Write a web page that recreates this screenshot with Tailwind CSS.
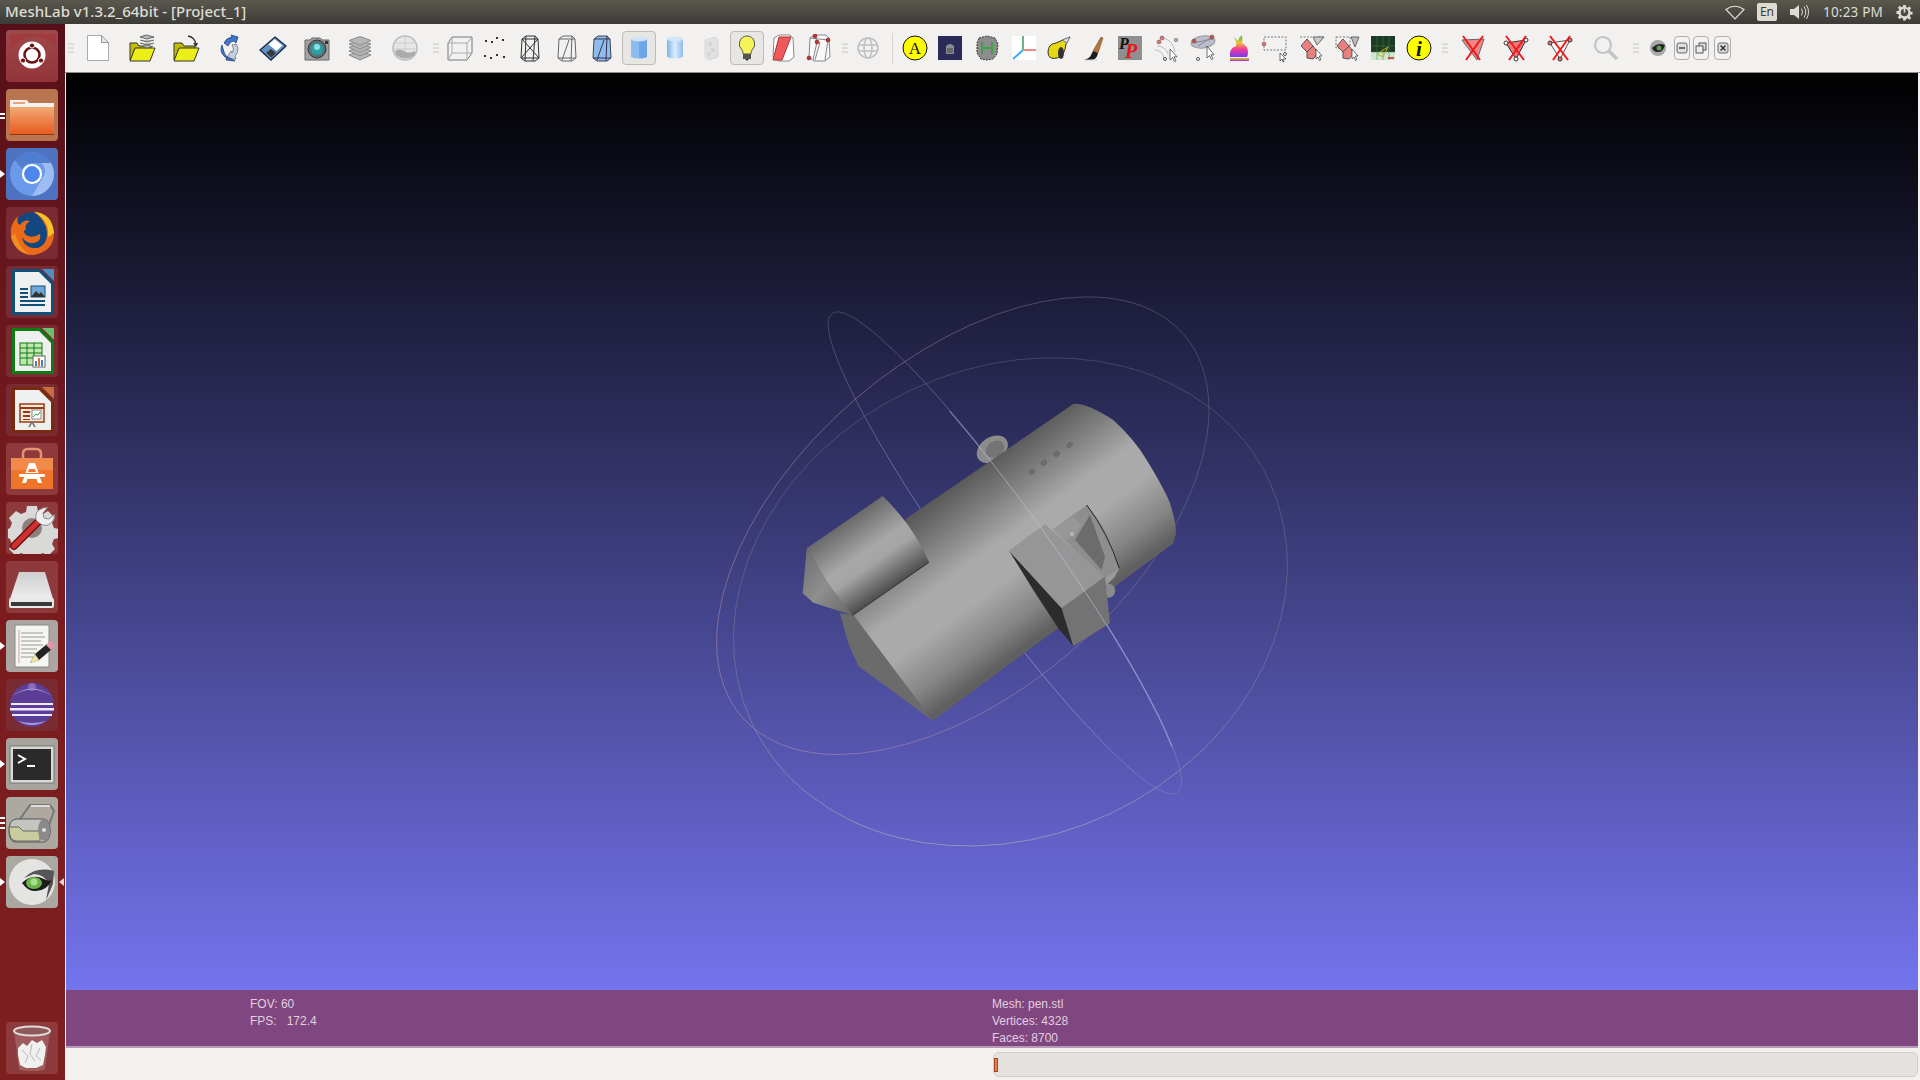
<!DOCTYPE html>
<html>
<head>
<meta charset="utf-8">
<title>MeshLab</title>
<script src="https://cdn.jsdelivr.net/npm/@tailwindcss/browser@4"></script>
</head>
<body class="w-[1920px] h-[1080px] overflow-hidden flex flex-col bg-[#f2f1f0] font-['Liberation_Sans',sans-serif]">

<!-- shared gradients -->
<svg class="absolute w-0 h-0">
  <defs>
    <linearGradient id="body" gradientUnits="userSpaceOnUse" x1="990" y1="460" x2="1091" y2="598">
      <stop offset="0" stop-color="#5a5a5a"/><stop offset=".2" stop-color="#7f7f7f"/><stop offset=".42" stop-color="#aaaaaa"/><stop offset=".62" stop-color="#aaaaaa"/><stop offset=".85" stop-color="#858585"/><stop offset="1" stop-color="#606060"/>
    </linearGradient>
    <linearGradient id="nose" gradientUnits="userSpaceOnUse" x1="882.7" y1="496" x2="928.6" y2="562.7">
      <stop offset="0" stop-color="#6a6a6a"/><stop offset=".45" stop-color="#a8a8a8"/><stop offset=".62" stop-color="#a4a4a4"/><stop offset="1" stop-color="#4e4e4e"/>
    </linearGradient>
    <linearGradient id="tip" x1="0" y1="0" x2="1" y2="1">
      <stop offset="0" stop-color="#6c6c6c"/><stop offset=".5" stop-color="#8f8f8f"/><stop offset="1" stop-color="#666666"/>
    </linearGradient>
    <linearGradient id="ringA" gradientUnits="userSpaceOnUse" x1="832" y1="314" x2="1177" y2="792">
      <stop offset="0" stop-color="#77778c"/><stop offset=".35" stop-color="#b4b4f0"/><stop offset=".7" stop-color="#c8c8f8"/><stop offset="1" stop-color="#8c8cb0"/>
    </linearGradient>
    <linearGradient id="ringB" gradientUnits="userSpaceOnUse" x1="716" y1="600" x2="1209" y2="400">
      <stop offset="0" stop-color="#d0a0b0"/><stop offset=".5" stop-color="#c094a4"/><stop offset="1" stop-color="#77778c"/>
    </linearGradient>
    <linearGradient id="ringC" gradientUnits="userSpaceOnUse" x1="1010" y1="358" x2="1010" y2="846">
      <stop offset="0" stop-color="#6e6e80"/><stop offset=".6" stop-color="#8a8a9c"/><stop offset="1" stop-color="#c0dcb8"/>
    </linearGradient>
    <linearGradient id="tile" x1="0" y1="0" x2="0" y2="1">
      <stop offset="0" stop-color="#ffffff" stop-opacity=".14"/><stop offset="1" stop-color="#ffffff" stop-opacity=".04"/>
    </linearGradient>
    <linearGradient id="blueCyl" x1="0" y1="0" x2="1" y2="0">
      <stop offset="0" stop-color="#7fb4ea"/><stop offset=".5" stop-color="#dcecfb"/><stop offset="1" stop-color="#8fbcec"/>
    </linearGradient>
    <linearGradient id="rainbow" x1="0" y1="0" x2="0" y2="1">
      <stop offset="0" stop-color="#3bc24a"/><stop offset=".35" stop-color="#f0c030"/><stop offset=".65" stop-color="#f03a9a"/><stop offset="1" stop-color="#7a3af0"/>
    </linearGradient>
    <linearGradient id="driveTop" x1="0" y1="0" x2="0" y2="1">
      <stop offset="0" stop-color="#cfcfcf"/><stop offset="1" stop-color="#ededed"/>
    </linearGradient>
    <linearGradient id="folderFront" x1="0" y1="0" x2="0" y2="1">
      <stop offset="0" stop-color="#f2a874"/><stop offset="1" stop-color="#e85c20"/>
    </linearGradient>
  </defs>
</svg>

<!-- top panel -->
<div class="h-6 shrink-0 flex items-center bg-linear-to-b from-[#5a584e] to-[#3c3b37] text-[#dfdbd2] font-['Noto_Sans',sans-serif]">
  <div class="pl-[5px] pb-[2px] text-[15px] font-medium">MeshLab v1.3.2_64bit - [Project_1]</div>
  <svg class="ml-auto w-[20px] h-[16px]" viewBox="0 0 20 16"><path d="M1 5.5Q10 -1 19 5.5L10 15z" fill="none" stroke="#e0ddd6" stroke-width="1.2"/></svg>
  <div class="ml-[12px] w-[20px] h-[18px] bg-[#dfdbd2] rounded-[2px] flex items-center justify-center text-[#3c3b37] text-[12px]">En</div>
  <svg class="ml-[12px] w-[20px] h-[16px]" viewBox="0 0 20 16"><path d="M1 5h4l5-4v14l-5-4H1z" fill="#dfdbd2"/><path d="M12.5 4.5q2 3.500 0 7M15 2.500q3.500 5.500 0 11M17.500 1q4 7 0 14" fill="none" stroke="#dfdbd2"/></svg>
  <div class="ml-[14px] text-[13.500px] tracking-[.2px]">10:23 PM</div>
  <svg class="ml-[13px] mr-[7px] w-[17px] h-[17px]" viewBox="0 0 18 18"><path d="M7.500 1h3v2.200l2 .8 1.600-1.500 2 2-1.500 1.600.8 2H17.500v3h-2.100l-.8 2 1.500 1.600-2 2-1.600-1.500-2 .8V17.500h-3v-2.100l-2-.8-1.600 1.500-2-2 1.500-1.600-.8-2H.500v-3h2.100l.8-2-1.500-1.600 2-2 1.600 1.500 2-.8z" fill="#dfdbd2"/><circle cx="9" cy="9" r="4" fill="#4b4a42"/><path d="M9 4v5" stroke="#dfdbd2" stroke-width="1.800"/></svg>
</div>

<div class="flex flex-1 min-h-0">

  <!-- launcher -->
  <div class="w-[65px] shrink-0 flex flex-col gap-[7px] pl-[6px] pt-[6px] pb-[6px] bg-linear-to-b from-[#56101a] via-[#7a1c1e] to-[#7d1f1f]">

    <div class="relative w-[52px] h-[52px]">
      <svg viewBox="0 0 52 52" class="w-full h-full"><rect width="52" height="52" rx="4" fill="#8e2c30"/><rect width="52" height="52" rx="4" fill="url(#tile)"/><path d="M4 20Q26 -6 50 18L50 4 4 4z" fill="#a03c3e"/><circle cx="26" cy="25" r="13.500" fill="#fff"/><circle cx="26" cy="25" r="7.500" fill="none" stroke="#6a1414" stroke-width="2.600"/><circle cx="26" cy="15.500" r="2.600" fill="#6a1414" stroke="#fff"/><circle cx="17" cy="30.500" r="2.600" fill="#6a1414" stroke="#fff"/><circle cx="35" cy="30.500" r="2.600" fill="#6a1414" stroke="#fff"/></svg>
    </div>

    <div class="relative w-[52px] h-[52px]">
      <span class="absolute -left-[6px] top-[24px] w-[5px] h-[2px] bg-white"></span><span class="absolute -left-[6px] top-[28px] w-[5px] h-[2px] bg-white"></span>
      <svg viewBox="0 0 52 52" class="w-full h-full"><rect width="52" height="52" rx="4" fill="#b8754f"/><path d="M4 11h17l2 3h25v6H4z" fill="#f5f2ee"/><path d="M7 13h12v2H7z" fill="#eaa37a"/><path d="M4 18h44v27H4z" fill="url(#folderFront)"/><path d="M4 45h44v1H4z" fill="#8a3a18"/></svg>
    </div>

    <div class="relative w-[52px] h-[52px]">
      <span class="absolute -left-[6px] top-[22px] border-y-[4px] border-y-transparent border-l-[5px] border-l-white"></span>
      <svg viewBox="0 0 52 52" class="w-full h-full"><rect width="52" height="52" rx="4" fill="#4e72c0"/><circle cx="26" cy="26" r="22" fill="#6c9aea"/><path d="M26 4a22 22 0 0 1 19 11H26a11 11 0 0 0-10 6L9 12A22 22 0 0 1 26 4z" fill="#4f7dd0"/><path d="M45 15a22 22 0 0 1-19 33l10-17a11 11 0 0 0-1-16z" fill="#9dbcf2"/><circle cx="26" cy="26" r="9" fill="#4d86ec" stroke="#fff" stroke-width="2.200"/></svg>
    </div>

    <div class="relative w-[52px] h-[52px]">
      <svg viewBox="0 0 52 52" class="w-full h-full"><rect width="52" height="52" rx="4" fill="#7a2a33"/><circle cx="27" cy="26" r="21" fill="#13477f"/><path d="M28 5Q46 6 48 26Q48 44 28 48Q10 48 5 30Q3 18 12 9Q10 16 14 18Q18 12 24 14Q18 18 20 22Q16 24 20 28Q26 32 34 27Q36 34 28 36Q20 37 16 30Q18 42 32 41Q44 36 40 20Q36 10 28 5z" fill="#ea6a1a"/><path d="M28 5Q46 6 48 26L42 30Q44 14 28 5z" fill="#f7c32a"/><path d="M5 30Q9 44 24 48Q12 40 9 26z" fill="#f09020"/></svg>
    </div>

    <div class="relative w-[52px] h-[52px]">
      <svg viewBox="0 0 52 52" class="w-full h-full"><rect width="52" height="52" rx="4" fill="#7a2a33"/><path d="M6 3h28l14 14v32H6z" fill="#0f4f78"/><path d="M9 6h24l12 12v28H9z" fill="#eef0f0"/><path d="M36 3h12v12z" fill="#4a90c0"/><path d="M14 22h8v2h-8zM14 26h8v2h-8zM14 30h8v2h-8zM14 34h25v2H14zM14 38h25v2H14z" fill="#0f4f78"/><rect x="25" y="20" width="14" height="11" fill="#6ea8d8" stroke="#0f4f78"/><path d="M25 31l5-6 3 3 2-2 4 5z" fill="#333"/></svg>
    </div>

    <div class="relative w-[52px] h-[52px]">
      <svg viewBox="0 0 52 52" class="w-full h-full"><rect width="52" height="52" rx="4" fill="#7a2a33"/><path d="M6 3h28l14 14v32H6z" fill="#127a12"/><path d="M9 6h24l12 12v28H9z" fill="#eef0f0"/><path d="M36 3h12v12z" fill="#6cc06c"/><rect x="14" y="18" width="22" height="22" fill="#bfe8b0" stroke="#127a12"/><path d="M14 23h22M14 28h22M14 33h22M21 18v22M28 18v22" stroke="#127a12"/><rect x="27" y="31" width="12" height="11" fill="#fff" stroke="#666"/><path d="M29 36h2v5h-2z" fill="#3a80d0"/><path d="M32 33h2v8h-2z" fill="#e07020"/><path d="M35 35h2v6h-2z" fill="#3a80d0"/></svg>
    </div>

    <div class="relative w-[52px] h-[52px]">
      <svg viewBox="0 0 52 52" class="w-full h-full"><rect width="52" height="52" rx="4" fill="#7a2a33"/><path d="M6 3h28l14 14v32H6z" fill="#7a2a0c"/><path d="M9 6h24l12 12v28H9z" fill="#eef0f0"/><path d="M36 3h12v12z" fill="#c8703c"/><rect x="14" y="20" width="24" height="18" fill="#f4e8dc" stroke="#9a3a10" stroke-width="1.500"/><path d="M14 24h24" stroke="#9a3a10" stroke-width="2"/><path d="M17 27h7v2h-7zM17 31h7v2h-7zM17 35h7v1h-7z" fill="#9a3a10"/><rect x="26" y="26" width="9" height="9" fill="#fff" stroke="#888"/><path d="M27 33l3-3 2 1 2-3" fill="none" stroke="#3a9a3a"/><path d="M26 38l-3 5M26 38l3 5" stroke="#777" stroke-width="1.500"/></svg>
    </div>

    <div class="relative w-[52px] h-[52px]">
      <svg viewBox="0 0 52 52" class="w-full h-full"><rect width="52" height="52" rx="4" fill="#8e3a3c"/><path d="M5 15h42v31H5z" fill="#f0752c"/><path d="M5 15h42v12H5z" fill="#f18a48"/><path d="M17 16v-5q0-5 5-5h8q5 0 5 5v5" fill="none" stroke="#e89070" stroke-width="2.500"/><path d="M23 20h6l7 20h-4l-1.500-4h-9L20 40h-4z" fill="#fff"/><path d="M17 30h18v3H17zM23 26h6l1 3h-8z" fill="#f0752c"/><rect x="13" y="31" width="26" height="3" rx="1" fill="#fff"/></svg>
    </div>

    <div class="relative w-[52px] h-[52px]">
      <svg viewBox="0 0 52 52" class="w-full h-full"><rect width="52" height="52" rx="4" fill="#8e3a3c"/><path d="M21 4h10l1 6 5 2 5-3 7 7-3 5 2 5 5 1v9l-5 1-2 5 3 5-7 7-5-3-5 2-1 1H21l-1-1-5-2-5 3-7-7 3-5-2-5-2-1v-9l2-1 2-5-3-5 7-7 5 3 5-2z" fill="#d9d9d7"/><circle cx="26" cy="26" r="10" fill="#8e7e7c"/><path d="M8 44L34 18" stroke="#6e1414" stroke-width="8" stroke-linecap="round"/><path d="M8 44L34 18" stroke="#d03030" stroke-width="5" stroke-linecap="round"/><path d="M30 18q-2-9 7-12l5-1-5 6 1 5 5 1 6-5q-1 8-7 11-6 2-12-5z" fill="#eeeeee" stroke="#777" stroke-width=".800"/></svg>
    </div>

    <div class="relative w-[52px] h-[52px]">
      <svg viewBox="0 0 52 52" class="w-full h-full"><rect width="52" height="52" rx="4" fill="#8e3a3c"/><path d="M13 11h26l8 27H4z" fill="url(#driveTop)"/><rect x="3" y="37" width="45" height="10" rx="2" fill="#e8e8e8"/><rect x="5" y="41" width="41" height="4" fill="#3a3a3a"/></svg>
    </div>

    <div class="relative w-[52px] h-[52px]">
      <span class="absolute -left-[6px] top-[22px] border-y-[4px] border-y-transparent border-l-[5px] border-l-white"></span>
      <svg viewBox="0 0 52 52" class="w-full h-full"><rect width="52" height="52" rx="4" fill="#aba6a1"/><rect x="9" y="5" width="34" height="42" fill="#f5f5f2" stroke="#8a8a8a"/><path d="M13 10v33" stroke="#e09a9a"/><path d="M15 13h22M15 17h24M15 21h20M15 25h22M15 29h16M15 33h14M15 37h12" stroke="#999"/><path d="M24 43l5-9 12-10 5 5-13 11z" fill="#222"/><path d="M40 25l3-3q2-1 3 0l2 2q1 1 0 3l-3 3z" fill="#e793b0"/><path d="M24 43l5-9 4 6z" fill="#f2e6a0"/></svg>
    </div>

    <div class="relative w-[52px] h-[52px]">
      <svg viewBox="0 0 52 52" class="w-full h-full"><rect width="52" height="52" rx="4" fill="#7a2a33"/><circle cx="26" cy="26" r="22" fill="#5c3e96"/><path d="M6 17Q26 4 46 17Q26 2 6 17z" fill="#fff" opacity=".5"/><path d="M5 24h42v2H5zM4 29h44v2.500H4zM6 35h40v2H6z" fill="#efe8fb"/><path d="M12 42Q26 50 40 42Q26 46 12 42z" fill="#b09ad8"/><circle cx="26" cy="8" r="4" fill="#a48ad6" opacity=".6"/></svg>
    </div>

    <div class="relative w-[52px] h-[52px]">
      <span class="absolute -left-[6px] top-[22px] border-y-[4px] border-y-transparent border-l-[5px] border-l-white"></span>
      <svg viewBox="0 0 52 52" class="w-full h-full"><rect width="52" height="52" rx="4" fill="#a8a29c"/><rect x="4" y="8" width="44" height="37" fill="#d8d8d6" stroke="#777"/><rect x="7" y="11" width="38" height="31" fill="#2a2a2a"/><path d="M12 17l7 4-7 4" fill="none" stroke="#fff" stroke-width="2"/><path d="M21 27h8v2h-8z" fill="#fff"/></svg>
    </div>

    <div class="relative w-[52px] h-[52px]">
      <span class="absolute -left-[6px] top-[20px] w-[5px] h-[2px] bg-white"></span><span class="absolute -left-[6px] top-[25px] w-[5px] h-[2px] bg-white"></span><span class="absolute -left-[6px] top-[30px] w-[5px] h-[2px] bg-white"></span>
      <svg viewBox="0 0 52 52" class="w-full h-full"><rect width="52" height="52" rx="4" fill="#aea9a0"/><path d="M14 22L24 8h20l4 6-8 22" fill="none" stroke="#777" stroke-width="2"/><path d="M25 9h19" stroke="#ddd" stroke-width="2"/><path d="M10 22h28a6 11 0 0 1 0 23H10q-7 0-7-11t7-12z" fill="#c4c4c0" stroke="#555"/><path d="M3 30h10l4 4h17v10H10q-7 0-7-14z" fill="#c9cc9c" stroke="#666"/><ellipse cx="38" cy="33" rx="6" ry="11" fill="#8a8a8a"/><circle cx="38" cy="33" r="2" fill="#ddd"/></svg>
    </div>

    <div class="relative w-[52px] h-[52px]">
      <span class="absolute -left-[6px] top-[22px] border-y-[4px] border-y-transparent border-l-[5px] border-l-white"></span>
      <span class="absolute left-[53px] top-[22px] border-y-[4px] border-y-transparent border-r-[5px] border-r-[#d8d8d8]"></span>
      <svg viewBox="0 0 52 52" class="w-full h-full"><rect width="52" height="52" rx="4" fill="#aaa8a0"/><circle cx="26" cy="26" r="23" fill="#e4e4e2"/><path d="M18 22Q30 10 48 15L47 28Q43 38 40 44L43 28Q38 18 28 18z" fill="#555"/><path d="M16 27Q26 17 38 23Q43 26 46 24Q40 36 28 35Q22 35 16 27z" fill="#1c1c1c"/><ellipse cx="28" cy="27" rx="8" ry="6" fill="#6cb24a"/><circle cx="28" cy="26" r="3.500" fill="#a6e08e"/></svg>
    </div>

    <div class="relative w-[52px] h-[52px] mt-auto">
      <svg viewBox="0 0 52 52" class="w-full h-full"><rect width="52" height="52" rx="4" fill="#8e3a3c"/><path d="M8 9l5 38q0 2 13 2t13-2l5-38z" fill="#a86a6a" opacity=".7"/><ellipse cx="26" cy="9" rx="18" ry="4.500" fill="#8e5a5a" stroke="#ddd" stroke-width="2"/><path d="M12 26l5-5 4 3 5-6 5 3 5-3 4 7-1 8-2 10-7 3h-10l-6-3-2-10z" fill="#f0f0ee"/><path d="M16 28l6 6-3 7M26 22l-2 10 5 7M34 26l-4 8 5 4" stroke="#b8b8b8" fill="none"/></svg>
    </div>
  </div>

  <div class="flex-1 min-w-0 flex flex-col">

    <!-- toolbar -->
    <div class="h-[49px] shrink-0 flex items-center border-b border-[#8c8c8c] bg-[#f2f1f0]">
      <svg class="ml-[2px] w-[8px] h-[10px]" viewBox="0 0 8 10"><path d="M1 1h6M1 5h6M1 9h6" stroke="#c8c8c6"/></svg>

      <svg class="ml-[9px] w-[28px] h-[28px]" viewBox="0 0 28 28"><path d="M3.500 1.500h14l7 7v18h-21z" fill="#fff" stroke="#aaa"/><path d="M17.500 1.500v7h7z" fill="#e8e8e8" stroke="#999"/></svg>
      <svg class="ml-4 w-[28px] h-[28px]" viewBox="0 0 28 28"><path d="M2 9h7l2 3h12v4H6L4 26H2z" fill="#c2bb00" stroke="#333"/><path d="M7 14h20l-5 13H2z" fill="#eded18" stroke="#333"/><path d="M12 3l6-2 8 2-7 2zM12 6l7 2 7-2M12 9l7 2 7-2M14 12l5 2 6-2" fill="#bbb" stroke="#666"/></svg>
      <svg class="ml-4 w-[28px] h-[28px]" viewBox="0 0 28 28"><path d="M2 9h8l2 3h11v4H6L4 26H2z" fill="#c2bb00" stroke="#333"/><path d="M7 14h20l-5 13H2z" fill="#eded18" stroke="#333"/><path d="M16 2q7 1 8 9" fill="none" stroke="#333" stroke-width="1.300"/><path d="M24 13l-3-4h5z" fill="#333"/></svg>
      <svg class="ml-4 w-[28px] h-[28px]" viewBox="0 0 28 28"><path d="M8 9q2-5 8-6l-1-2 7 2-2 6-2-2q-4 0-6 5z" fill="#3f76d0" stroke="#17306a" stroke-width=".700"/><path d="M20 10q4 5 0 11l-1 1 1 3H10l5-8 1 2q3-4 0-8z" fill="#c4cfe0" stroke="#667" stroke-width=".700"/><path d="M6 11q-3 7 3 12l2 1-1 2 9 1-5-3q-5-1-6-6z" fill="#3f76d0" stroke="#17306a" stroke-width=".700"/></svg>
      <svg class="ml-[15px] w-[28px] h-[28px]" viewBox="0 0 28 28"><path d="M16 3l11 9-15 14L1 16z" fill="#5f90c6" stroke="#1d2a3c" stroke-width="1.300"/><path d="M15.500 5l8 6.500-6 5.500-8-6.500z" fill="#fff"/><path d="M7 19l5-4 5 4-4.500 4.500z" fill="#3a3a3a"/></svg>
      <svg class="ml-4 w-[28px] h-[28px]" viewBox="0 0 28 28"><path d="M2 6h5l2-2h8l2 2h7v20H2z" fill="#a3a3a5" stroke="#666"/><circle cx="14" cy="15" r="9" fill="#5b6f75" stroke="#333"/><circle cx="14" cy="15" r="6" fill="#28a0a8"/><circle cx="14" cy="13" r="3" fill="#8ce0e0"/><rect x="22" y="7" width="3" height="3" fill="#333"/></svg>
      <svg class="ml-[15px] w-[28px] h-[28px]" viewBox="0 0 28 28"><g fill="#b6b6b6" stroke="#8a8a8a"><path d="M3 21l11-4 11 4-11 5z"/><path d="M3 17l11-4 11 4-11 5z"/><path d="M3 13.500l11-4 11 4-11 5z"/><path d="M3 10l11-4 11 4-11 5z"/><path d="M3 6.500l11-4 11 4-11 5z"/></g></svg>
      <svg class="ml-[17px] w-[28px] h-[28px]" viewBox="0 0 28 28"><circle cx="14" cy="14" r="12" fill="#e6e6e6" stroke="#bbb" stroke-width="1.500"/><path d="M14 2v24M3 9h22M2 15h24M3 21h22" stroke="#ccc"/><path d="M4 17q5-3 9 0t11 0v4Q14 28 5 21z" fill="#aaa"/></svg>

      <svg class="ml-[13px] w-[8px] h-[10px]" viewBox="0 0 8 10"><path d="M1 1h6M1 5h6M1 9h6" stroke="#c8c8c6"/></svg>

      <svg class="ml-[5px] w-[28px] h-[28px]" viewBox="0 0 28 28" fill="none" stroke="#777"><path d="M3 9l4-6h20v16l-5 7H3z"/><path d="M3 9h19v17M22 9l5-6M7 3v16h20M7 19l-4 7"  stroke="#aaa"/></svg>
      <svg class="ml-2 w-[28px] h-[28px]" viewBox="0 0 28 28" fill="#333"><rect x="4" y="6" width="2" height="2"/><rect x="10" y="7" width="2" height="2"/><rect x="15" y="3" width="2" height="2"/><rect x="21" y="5" width="2" height="2"/><rect x="3" y="21" width="2" height="2"/><rect x="9" y="23" width="2" height="2"/><rect x="15" y="20" width="2" height="2"/><rect x="22" y="22" width="2" height="2"/></svg>
      <svg class="ml-[7px] w-[28px] h-[28px]" viewBox="0 0 28 28" fill="none" stroke="#333"><path d="M6 5l4-3h9l3 3 1 19-4 3H9l-4-3z"/><path d="M6 5l17 19M22 5L5 24M10 2l-1 25M19 2l-2 25M6 5h16M5 24h18"/></svg>
      <svg class="ml-[9px] w-[28px] h-[28px]" viewBox="0 0 28 28" fill="none" stroke="#666"><path d="M6 5l4-3h9l3 3 1 19-4 3H9l-4-3z"/><path d="M6 5h16M5 24h18M16 6L9 26M19 2l-1 25"/></svg>
      <svg class="ml-[7px] w-[28px] h-[28px]" viewBox="0 0 28 28"><path d="M6 5l4-3h9l3 3 1 19-4 3H9l-4-3z" fill="#8fbce8" stroke="#445"/><path d="M6 5h16M5 24h18M16 6L9 26M19 2l-1 25" fill="none" stroke="#335"/></svg>

      <div class="ml-1.5 w-[34px] h-[34px] flex items-center justify-center rounded-[4px] border border-[#bdbcb9] bg-[#e8e6e3]">
        <svg class="w-[24px] h-[26px]" viewBox="0 0 24 26"><path d="M4 4q8-3 16 0v18q-8 3-16 0z" fill="#8abcf0"/><path d="M12 3h8v19q-4 2-8 1z" fill="#6aa6e8"/><ellipse cx="12" cy="4" rx="8" ry="2.500" fill="#cfe2f6"/></svg>
      </div>
      <svg class="ml-[5px] w-[28px] h-[28px]" viewBox="0 0 28 28"><path d="M6 5q8-3 16 0v18q-8 3-16 0z" fill="url(#blueCyl)"/><ellipse cx="14" cy="5" rx="8" ry="2.500" fill="#d4e6f8"/></svg>
      <svg class="ml-2 w-[28px] h-[28px]" viewBox="0 0 28 28" opacity=".28"><path d="M8 6l10-3 3 3v17l-9 3-4-3z" fill="#bbb" stroke="#999"/><circle cx="13" cy="10" r="2" fill="#888"/><circle cx="16" cy="16" r="2" fill="#888"/><circle cx="12" cy="20" r="2" fill="#888"/></svg>
      <div class="ml-[5px] w-[34px] h-[34px] flex items-center justify-center rounded-[4px] border border-[#bdbcb9] bg-[#e8e6e3]">
        <svg class="w-[22px] h-[28px]" viewBox="0 0 22 28"><path d="M11 2a8 8 0 0 1 5 14q-1 1-1 4H7q0-3-1-4A8 8 0 0 1 11 2z" fill="#f6f35a" stroke="#555"/><rect x="7" y="20" width="8" height="5" fill="#555"/><path d="M9 25h4l-2 2z" fill="#333"/></svg>
      </div>
      <svg class="ml-1 w-[28px] h-[28px]" viewBox="0 0 28 28"><path d="M6 4l5-3h11l3 3 1 19-5 4H10l-5-4z" fill="#fff" stroke="#888"/><path d="M11 3h12l-9 23H5z" fill="#ee5a5a" stroke="#a33"/></svg>
      <svg class="ml-2 w-[28px] h-[28px]" viewBox="0 0 28 28"><path d="M6 4l5-3h11l3 3 1 19-5 4H10l-5-4z" fill="#f8f8f8" stroke="#888"/><path d="M6 4l18 2M11 1l2 7-4 18M16 8l-5 18M24 6l-3 20" fill="none" stroke="#888"/><g fill="#c62f38" stroke="#6a1a1a" stroke-width=".500"><circle cx="11" cy="2" r="2"/><circle cx="13" cy="8" r="2"/><circle cx="24" cy="6" r="2"/><circle cx="5" cy="24" r="2"/></g></svg>

      <svg class="ml-[9px] w-[8px] h-[10px]" viewBox="0 0 8 10"><path d="M1 1h6M1 5h6M1 9h6" stroke="#c8c8c6"/></svg>
      <svg class="ml-[5px] w-[28px] h-[28px]" viewBox="0 0 28 28" fill="none" stroke="#c0c0c0" stroke-width="1.500"><circle cx="14" cy="14" r="10"/><ellipse cx="14" cy="14" rx="4" ry="10"/><path d="M4 11h20M4 17h20"/></svg>
      <div class="ml-2.5 w-px h-[31px] bg-[#d6d5d3]"></div>

      <svg class="ml-2 w-[28px] h-[28px]" viewBox="0 0 28 28"><circle cx="14" cy="14" r="12" fill="#ffff00" stroke="#111" stroke-width="1"/><text x="14" y="20" text-anchor="middle" font-family="Liberation Serif" font-size="17" fill="#111">A</text></svg>
      <svg class="ml-[7px] w-[28px] h-[28px]" viewBox="0 0 28 28"><rect x="2" y="2" width="24" height="24" fill="#2b2b5a"/><path d="M10 20v-8q4-4 8 0v8z" fill="#8c8c90"/><path d="M12 14v5M14 14v5M16 14v5" stroke="#444"/></svg>
      <svg class="ml-[9px] w-[28px] h-[28px]" viewBox="0 0 28 28"><path d="M6 4l8-2 8 2 3 6-1 10-4 5-6 1-6-1-4-6V9z" fill="#8c8c8c" stroke="#333" stroke-dasharray="2 1"/><path d="M9 8v12M19 8v12M9 14h10" stroke="#3fa04a" stroke-width="2" fill="none"/></svg>
      <svg class="ml-[9px] w-[28px] h-[28px]" viewBox="0 0 28 28"><rect x="2" y="2" width="24" height="24" fill="#fff"/><path d="M13 2v14" stroke="#3a9a5a" stroke-width="1.500"/><path d="M13 16h13" stroke="#f08a8a" stroke-width="2"/><path d="M13 16L3 25" stroke="#38aef0" stroke-width="2"/></svg>
      <svg class="ml-1.5 w-[28px] h-[28px]" viewBox="0 0 28 28"><path d="M4 18q0-8 8-9l14-6-4 7q-1 12-9 14-9 2-9-6z" fill="#e6d712" stroke="#333"/><path d="M18 6l8-3-3 6z" fill="#ddd" stroke="#777"/><ellipse cx="17" cy="19" rx="3" ry="6" fill="#333"/></svg>
      <svg class="ml-[7px] w-[28px] h-[28px]" viewBox="0 0 28 28"><path d="M14 17L22 3l2 1-5 15z" fill="#b0743c" stroke="#6a4018" stroke-width=".500"/><path d="M14 17l5 2q-1 6-6 7H5q6-2 7-5z" fill="#1c1c1c"/><path d="M6 26h12" stroke="#ccc"/></svg>
      <svg class="ml-[9px] w-[28px] h-[28px]" viewBox="0 0 28 28"><rect x="2" y="2" width="24" height="24" fill="#8f8f8f"/><text x="3" y="15" font-family="Liberation Serif" font-weight="bold" font-style="italic" font-size="16" fill="#111">P</text><text x="9" y="24" font-family="Liberation Serif" font-weight="bold" font-style="italic" font-size="20" fill="#e8141a">P</text></svg>
      <svg class="ml-[9px] w-[28px] h-[28px]" viewBox="0 0 28 28"><path d="M4 12q8 0 11 8M2 16q7 0 9 8M10 4q10 2 12 14" fill="none" stroke="#bbb"/><circle cx="9" cy="4" r="2" fill="#e07070" stroke="#555" stroke-width=".500"/><circle cx="6" cy="8" r="2" fill="#e07070" stroke="#555" stroke-width=".500"/><circle cx="23" cy="6" r="1.500" fill="#fff" stroke="#555"/><circle cx="12" cy="25" r="1.500" fill="#fff" stroke="#555"/><path d="M17 15v11l2.500-2.500 2 4 1.500-.7-2-4H24z" fill="#fff" stroke="#333" stroke-width=".700"/></svg>
      <svg class="ml-[9px] w-[28px] h-[28px]" viewBox="0 0 28 28"><ellipse cx="13" cy="8" rx="12" ry="6" transform="rotate(-8 13 8)" fill="#bcbcd0" stroke="#999"/><path d="M3 9l20-4M8 12L20 4" stroke="#888" fill="none"/><circle cx="4" cy="7" r="2" fill="#d84848" stroke="#555" stroke-width=".500"/><circle cx="22" cy="3" r="2" fill="#d84848" stroke="#555" stroke-width=".500"/><circle cx="8" cy="25" r="1.500" fill="#fff" stroke="#555"/><path d="M17 12v12l2.500-2.500 2 4 1.500-.7-2-4H24z" fill="#fff" stroke="#333" stroke-width=".700"/></svg>
      <svg class="ml-[7px] w-[28px] h-[28px]" viewBox="0 0 28 28"><path d="M5 23q-1-9 6-11 1-4-2-9l4 4q1-4 4-6 1 5 0 8 6 3 6 9 0 3-1 5z" fill="url(#rainbow)"/><path d="M5 24h19v3H5z" fill="url(#rainbow)"/></svg>
      <svg class="ml-2 w-[28px] h-[28px]" viewBox="0 0 28 28"><rect x="3" y="3" width="22" height="13" fill="none" stroke="#777" stroke-dasharray="2 1.500"/><circle cx="3" cy="10" r="2" fill="#e07070" stroke="#555" stroke-width=".500"/><circle cx="24" cy="20" r="1.500" fill="#fff" stroke="#555"/><path d="M19 19v8l2-2 1 3 1-.5-1-2.500h3z" fill="#fff" stroke="#333" stroke-width=".700"/></svg>
      <svg class="ml-2 w-[28px] h-[28px]" viewBox="0 0 28 28"><path d="M3 3h12M21 3h6" stroke="#777" stroke-dasharray="2 1.500"/><path d="M10 5l6 7-6 6-6-6zM10 18l6-6 5 7-5 6-6-1z" fill="#ec8080" stroke="#555"/><path d="M16 3h11l-7 8z" fill="#ccc" stroke="#666"/><path d="M19 15v10l2-2 1.500 3.500 1.300-.6L22.300 22H25z" fill="#fff" stroke="#333" stroke-width=".700"/></svg>
      <svg class="ml-2 w-[28px] h-[28px]" viewBox="0 0 28 28"><path d="M3 3h14v11H3z" fill="none" stroke="#777" stroke-dasharray="2 1.500"/><path d="M10 5l6 7-6 6-6-6zM10 18l6-6 5 7-5 6-6-1z" fill="#ec8080" stroke="#555"/><path d="M18 3h8l-4 10z" fill="#bbb" stroke="#666"/><path d="M19 15v10l2-2 1.500 3.500 1.300-.6L22.300 22H25z" fill="#fff" stroke="#333" stroke-width=".700"/></svg>
      <svg class="ml-2 w-[28px] h-[28px]" viewBox="0 0 28 28"><rect x="2" y="2" width="24" height="24" fill="#1d3a24"/><rect x="2" y="18" width="24" height="8" fill="#cfe6cf"/><path d="M2 12h24M2 18h24M8 2v24M14 2v24M20 2v24" stroke="#3a8a4a" stroke-width=".500"/><path d="M8 20l11-7-5 10z" fill="none" stroke="#c8b020" stroke-width="1"/><path d="M19 24h6" stroke="#d02020" stroke-width="1.500"/></svg>
      <svg class="ml-2 w-[28px] h-[28px]" viewBox="0 0 28 28"><circle cx="14" cy="14" r="12" fill="#ffff00" stroke="#111"/><text x="14" y="22" text-anchor="middle" font-family="Liberation Serif" font-weight="bold" font-style="italic" font-size="21" fill="#111">i</text></svg>

      <svg class="ml-2 w-[8px] h-[10px]" viewBox="0 0 8 10"><path d="M1 1h6M1 5h6M1 9h6" stroke="#c8c8c6"/></svg>

      <svg class="ml-2.5 w-[28px] h-[28px]" viewBox="0 0 28 28"><path d="M3 6l22-1-7 21z" fill="#ee8888" stroke="#666"/><path d="M4 2l17 24M24 2L7 26" stroke="#f01818" stroke-width="2"/></svg>
      <svg class="ml-[15px] w-[28px] h-[28px]" viewBox="0 0 28 28"><path d="M4 9l20-3-10 19z" fill="#ee7878" stroke="#333"/><circle cx="4" cy="9" r="2" fill="#fff" stroke="#333"/><circle cx="24" cy="6" r="2" fill="#fff" stroke="#333"/><circle cx="14" cy="25" r="2" fill="#fff" stroke="#333"/><path d="M4 2l18 24M24 2L7 26" stroke="#f01818" stroke-width="2"/></svg>
      <svg class="ml-4 w-[28px] h-[28px]" viewBox="0 0 28 28"><path d="M4 9l20-3-10 19z" fill="#f8f8f8" stroke="#555"/><circle cx="4" cy="9" r="2" fill="#ee7878" stroke="#333"/><circle cx="24" cy="6" r="2" fill="#ee7878" stroke="#333"/><circle cx="14" cy="25" r="2" fill="#ee7878" stroke="#333"/><path d="M4 2l18 24M24 2L7 26" stroke="#f01818" stroke-width="2"/></svg>
      <svg class="ml-[18px] w-[28px] h-[28px]" viewBox="0 0 28 28"><circle cx="11" cy="11" r="8" fill="none" stroke="#c4c4c4" stroke-width="2.200"/><path d="M17 17l8 8" stroke="#c4c4c4" stroke-width="3.500"/></svg>

      <svg class="ml-3 w-[8px] h-[10px]" viewBox="0 0 8 10"><path d="M1 1h6M1 5h6M1 9h6" stroke="#c8c8c6"/></svg>

      <svg class="ml-[9px] w-[18px] h-[18px]" viewBox="0 0 18 18"><circle cx="9" cy="9" r="8" fill="#a8a8a8"/><path d="M3 9q6-6 13-3-2 8-8 7-3 0-5-4z" fill="#222"/><circle cx="10" cy="9" r="2.500" fill="#5aa04a"/></svg>
      <div class="ml-[7px] w-4 h-6 flex items-center justify-center rounded-[4px] border border-[#b0afad] bg-[#f4f3f2]"><svg class="w-[12px] h-[12px]" viewBox="0 0 12 12"><rect x="1" y="1" width="10" height="10" rx="2" fill="#ddd" stroke="#666"/><path d="M3 6h6" stroke="#444" stroke-width="1.500"/></svg></div>
      <div class="ml-[3px] w-4 h-6 flex items-center justify-center rounded-[4px] border border-[#b0afad] bg-[#f4f3f2]"><svg class="w-[12px] h-[12px]" viewBox="0 0 12 12"><rect x="4" y="1" width="7" height="7" fill="#ddd" stroke="#555"/><rect x="1" y="4" width="7" height="7" fill="#eee" stroke="#555"/></svg></div>
      <div class="ml-[5px] w-[17px] h-6 flex items-center justify-center rounded-[4px] border border-[#b0afad] bg-[#f4f3f2]"><svg class="w-[12px] h-[12px]" viewBox="0 0 12 12"><rect x="1" y="1" width="10" height="10" rx="2" fill="#ddd" stroke="#666"/><path d="M3.500 3.500l5 5M8.500 3.500l-5 5" stroke="#333" stroke-width="1.500"/></svg></div>
    </div>

    <!-- gl viewport -->
    <div class="relative flex-1 min-h-0 ml-px mr-[2px] bg-linear-to-b/srgb from-black to-[#7474ee]">
      <svg class="absolute inset-0 w-full h-full" viewBox="66 73 1852 917">
        <g fill="none" stroke-width=".8" opacity=".55">
          <path d="M832.200 313.700A295 44 54.200 1 1 1177.400 792.100A295 44 54.200 1 1 832.200 313.700z" stroke="url(#ringA)" />
          <path d="M742 717A292 166 -40.900 1 1 1183.600 334.400A292 166 -40.900 1 1 742 717z" stroke="url(#ringB)" />
          <path d="M751.900 723.100A285.500 234 -25.100 1 1 1269.100 480.700A285.500 234 -25.100 1 1 751.900 723.100z" stroke="url(#ringC)" />
        </g>

        <!-- knob -->
        <ellipse cx="992.300" cy="449.300" rx="17" ry="12" transform="rotate(-35 992.300 449.300)" fill="#8c8c8c"/>
        <ellipse cx="995" cy="449" rx="10" ry="7.500" transform="rotate(-35 995 449)" fill="#747474"/>
        <!-- rear cone -->
        <path d="M840 613.300L848.300 643.300L858.300 666L932.700 720.700L853.300 615z" fill="#6b6b6b"/>
        <!-- main barrel -->
        <path d="M906.700 518.300L1073.300 404Q1085 402 1113.300 420Q1135 440 1146.700 460Q1165 490 1170 503.300Q1177 525 1175.700 535L1173.300 543.300L932.700 720.700L853.300 615z" fill="url(#body)"/>
        <!-- nose -->
        <path d="M806.700 548.300L882.700 496Q895 508 906.700 523.300Q922 545 929 562.300L852.700 615.300Q838 600 826.700 581.700z" fill="url(#nose)"/>
        <path d="M806.700 548.300L802.700 593.300L813.300 602.700L852.700 615.300L826.700 581.700z" fill="url(#tip)"/>
        <path d="M852.700 615.300L929 562.300" stroke="#222" stroke-width=".800"/>
        <!-- rear knob behind side block -->
        <circle cx="1108.300" cy="590.700" r="7" fill="#8a8a8a"/>
        <!-- window cut-out -->
        <path d="M1053.300 529.300L1086.700 505Q1097 517 1105 530Q1114 548 1119.300 568.300L1105 578z" fill="#8e8e8e"/>
        <path d="M1075 540L1090 515L1105 556.700L1101.700 570z" fill="#6c6c6c"/>
        <path d="M1053.300 529.300L1073.300 516.700L1081.700 525L1073.300 536.700L1063.300 540z" fill="#979797"/>
        <circle cx="1072" cy="534" r="2" fill="#b8b8b8"/>
        <path d="M1086.700 505Q1108 533 1119.300 568.300" fill="none" stroke="#222"/>
        <path d="M1101.700 580L1119.300 568.300L1114 578L1105 586z" fill="#9a9a9a"/>
        <!-- side block -->
        <path d="M1009 550.700L1033.300 590L1058.300 628.300L1073.300 646L1061.700 608.300z" fill="#2c2c2c"/>
        <path d="M1009 550.700L1045 524.300L1105 576.700L1061.700 608.300z" fill="#969696"/>
        <path d="M1061.700 608.300L1105 576.700L1110 623.300L1073.300 646z" fill="#737373"/>
        <!-- holes -->
        <g fill="#6e6e6e" stroke="#5a5a5a" stroke-width=".500">
          <ellipse cx="1031.700" cy="471.700" rx="3" ry="2.200" transform="rotate(-35 1031.700 471.700)"/>
          <ellipse cx="1044" cy="462.700" rx="3" ry="2.200" transform="rotate(-35 1044 462.700)"/>
          <ellipse cx="1056.700" cy="454" rx="3" ry="2.200" transform="rotate(-35 1056.700 454)"/>
          <ellipse cx="1069.700" cy="445" rx="3" ry="2.200" transform="rotate(-35 1069.700 445)"/>
        </g>
        <!-- front half of the trackball ring -->
        <path d="M949.400 411A295 44 54.200 0 1 1172.100 747.200" fill="none" stroke="#c6c6f8" stroke-width=".8" opacity=".7"/>
      </svg>
    </div>

    <!-- info panel -->
    <div class="h-[58px] shrink-0 ml-px mr-[2px] bg-[#80467f] border-b-2 border-[#b79ab6] relative text-[12px] leading-[17px] text-[#e0cfe0]">
      <div class="absolute left-[184px] top-[6px]">
        <div>FOV: 60</div>
        <div>FPS: &nbsp; 172.4</div>
      </div>
      <div class="absolute left-[926px] top-[6px]">
        <div>Mesh: pen.stl</div>
        <div>Vertices: 4328</div>
        <div>Faces: 8700</div>
      </div>
    </div>

    <!-- status bar -->
    <div class="h-[32px] shrink-0 flex items-center pl-[928px] pr-[2px] pt-px bg-[#f2f1f0]">
      <div class="flex-1 h-[25px] rounded-[6px] border border-[#cfcdca] bg-[#e3e2df] flex items-center">
        <div class="w-[4px] h-[14px] bg-[#f07a4a] border border-[#a04a20]"></div>
      </div>
    </div>
  </div>
</div>
</body>
</html>
